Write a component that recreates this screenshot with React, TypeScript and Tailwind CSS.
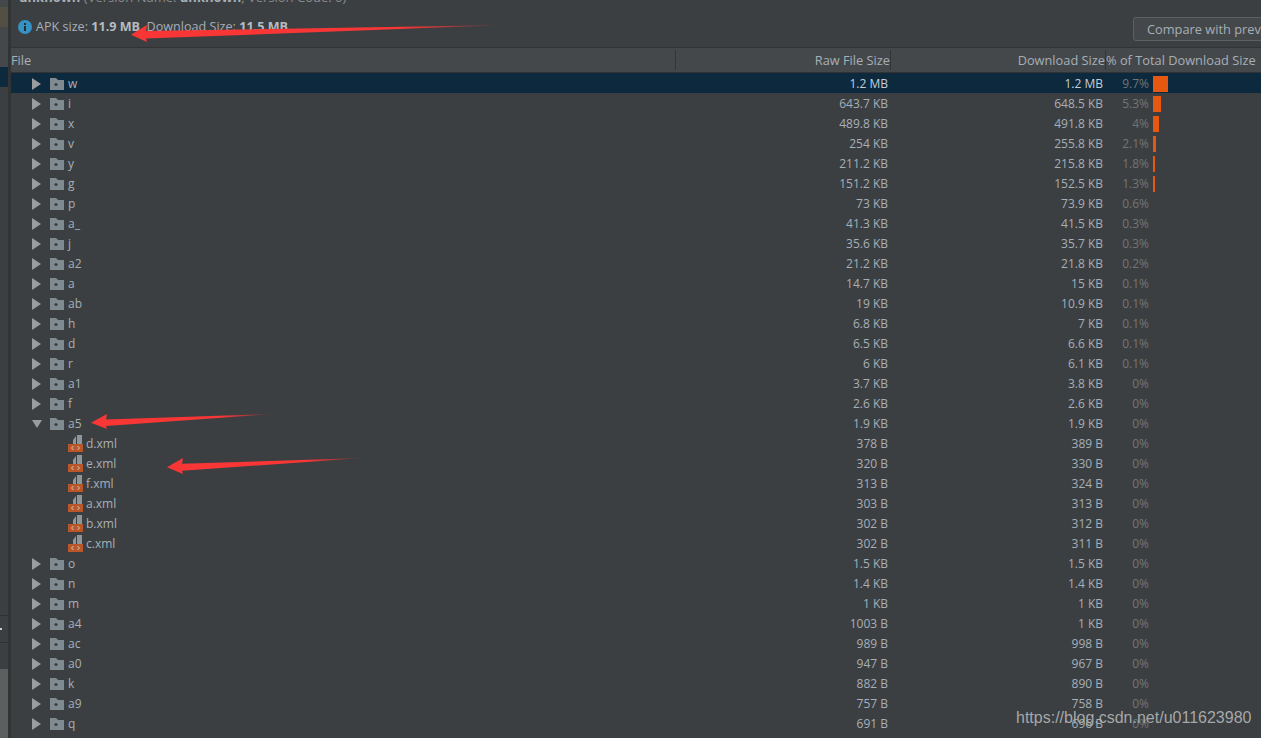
const rows: [string, string, string, string, number, boolean?][] = [
  ["w", "1.2 MB", "1.2 MB", "9.7%", 15],
  ["i", "643.7 KB", "648.5 KB", "5.3%", 8],
  ["x", "489.8 KB", "491.8 KB", "4%", 6],
  ["v", "254 KB", "255.8 KB", "2.1%", 3],
  ["y", "211.2 KB", "215.8 KB", "1.8%", 2],
  ["g", "151.2 KB", "152.5 KB", "1.3%", 2],
  ["p", "73 KB", "73.9 KB", "0.6%", 0],
  ["a_", "41.3 KB", "41.5 KB", "0.3%", 0],
  ["j", "35.6 KB", "35.7 KB", "0.3%", 0],
  ["a2", "21.2 KB", "21.8 KB", "0.2%", 0],
  ["a", "14.7 KB", "15 KB", "0.1%", 0],
  ["ab", "19 KB", "10.9 KB", "0.1%", 0],
  ["h", "6.8 KB", "7 KB", "0.1%", 0],
  ["d", "6.5 KB", "6.6 KB", "0.1%", 0],
  ["r", "6 KB", "6.1 KB", "0.1%", 0],
  ["a1", "3.7 KB", "3.8 KB", "0%", 0],
  ["f", "2.6 KB", "2.6 KB", "0%", 0],
  ["a5", "1.9 KB", "1.9 KB", "0%", 0, true],
  ["d.xml", "378 B", "389 B", "0%", -1],
  ["e.xml", "320 B", "330 B", "0%", -1],
  ["f.xml", "313 B", "324 B", "0%", -1],
  ["a.xml", "303 B", "313 B", "0%", -1],
  ["b.xml", "302 B", "312 B", "0%", -1],
  ["c.xml", "302 B", "311 B", "0%", -1],
  ["o", "1.5 KB", "1.5 KB", "0%", 0],
  ["n", "1.4 KB", "1.4 KB", "0%", 0],
  ["m", "1 KB", "1 KB", "0%", 0],
  ["a4", "1003 B", "1 KB", "0%", 0],
  ["ac", "989 B", "998 B", "0%", 0],
  ["a0", "947 B", "967 B", "0%", 0],
  ["k", "882 B", "890 B", "0%", 0],
  ["a9", "757 B", "758 B", "0%", 0],
  ["q", "691 B", "696 B", "0%", 0],
  ["\u00a0", "", "", "", 0],
];

function Folder() {
  return (
    <svg width="14" height="12" viewBox="0 0 14 12" className="shrink-0">
      <path d="M0 0H6L8 2H14V12H0Z" fill="#7f8b91" />
      <circle cx="6" cy="6.5" r="1.6" fill="#3c3f41" />
    </svg>
  );
}

function XmlFile() {
  return (
    <svg width="15" height="17" viewBox="0 0 15 17" className="shrink-0">
      <path d="M5 5L8 1V9H5Z" fill="#8f9699" />
      <rect x="9" y="0" width="5" height="9" fill="#8f9699" />
      <rect x="0" y="9" width="15" height="8" fill="#b9562a" />
      <path d="M5.500 11L3.500 13L5.500 15M9.500 11L11.500 13L9.500 15" fill="none" stroke="#d8c8bc" strokeWidth="1" />
    </svg>
  );
}

function Arrow({ className, w, h }: { className: string; w: number; h: number }) {
  return (
    <svg width={w} height={h} viewBox={`0 0 ${w} ${h}`} className={`absolute ${className}`}>
      <defs>
        <linearGradient id={`g${w}`} x1="0" x2="1" y1="0" y2="0">
          <stop offset="0.72" stopColor="#f93636" />
          <stop offset="1" stopColor="#f93636" stopOpacity="0.15" />
        </linearGradient>
      </defs>
      <path
        d={`M0 ${h * 0.58}L16 0L15 ${h * 0.36}L${w} 0L15 ${h * 0.8}L16 ${h}Z`}
        fill={`url(#g${w})`}
      />
    </svg>
  );
}

function Row({ r, selected }: { r: (typeof rows)[number]; selected: boolean }) {
  const [name, raw, dl, pct, bar, open] = r;
  const isFile = bar === -1;
  return (
    <div className={`grid h-5 shrink-0 grid-cols-[664px_215px_215px_156px] items-center ${selected ? "bg-[#0d293e]" : ""}`}>
      <div className="flex items-center">
        {isFile ? (
          <div className="ml-[57px] flex items-center gap-[3px]">
            <XmlFile />
            <span className="pt-px">{name}</span>
          </div>
        ) : name ? (
          <div className="ml-[21px] flex items-center">
            <svg width="10" height="12" viewBox="0 0 10 12" className="mr-[8px] shrink-0">
              {open ? <path d="M0 2H10L5 10Z" fill="#9a9c9e" /> : <path d="M0 0L9 6L0 12Z" fill="#9a9c9e" />}
            </svg>
            <Folder />
            <span className="ml-[4px] pt-px">{name}</span>
          </div>
        ) : null}
      </div>
      <div className={`pr-[2px] pt-px text-right ${selected ? "text-[#c3ced8]" : ""}`}>{raw}</div>
      <div className={`pr-[2px] pt-px text-right ${selected ? "text-[#c3ced8]" : ""}`}>{dl}</div>
      <div className="flex h-5 items-center text-[#727577]">
        <span className="w-[44px] pt-px text-right">{pct}</span>
        {bar > 0 && <div className="ml-[4px] h-4 bg-[#e6570f]" style={{ width: bar }} />}
      </div>
    </div>
  );
}

export default function App() {
  return (
    <div className="relative flex h-[738px] w-[1261px] overflow-hidden bg-[#3c3f41] font-['Open_Sans','Noto_Sans',sans-serif] text-[12px] leading-5 text-[#a6afb8]">
      {/* left tool strip */}
      <div className="flex w-2 shrink-0 flex-col bg-[#3c3f41]">
        <div className="h-[7px] bg-[#45484a]" />
        <div className="h-[20px] bg-[#534f45]" />
        <div className="h-[40px] bg-[#45484a]" />
        <div className="h-[20px] bg-[#0d293e]" />
        <div className="h-[528px] bg-[#3c3f41]" />
        <div className="h-px bg-[#2e3032]" />
        <div className="flex h-[26px] items-center bg-[#3c3f41]">
          <div className="h-[2px] w-[2px] bg-[#c8cacc]" />
        </div>
        <div className="h-px bg-[#2e3032]" />
        <div className="h-[26px] bg-[#3c3f41]" />
        <div className="flex-1 bg-[#5b5f60]" />
      </div>
      <div className="w-[3px] shrink-0 bg-[#313335]" />

      {/* main */}
      <div className="flex min-w-0 flex-1 flex-col">
        <div className="h-[47px] shrink-0 overflow-hidden">
          <div className="-mt-[13px] ml-[8px] h-5 whitespace-nowrap text-[13px] text-[#888b8d]">
            <b className="text-[#a6afb8]">unknown</b> (Version Name: <b className="text-[#a6afb8]">unknown</b>, Version Code: 0)
          </div>
          <div className="mt-[6px] flex items-start justify-between">
            <div className="ml-[7px] mt-[4px] flex items-center">
              <svg width="14" height="14" viewBox="0 0 14 14" className="mr-[4px]">
                <circle cx="7" cy="7" r="7" fill="#3592c4" />
                <rect x="6" y="6" width="2" height="5" fill="#2b2d2e" />
                <rect x="6" y="3" width="2" height="2" fill="#2b2d2e" />
              </svg>
              <span className="whitespace-nowrap text-[12.6px]">
                APK size: <b className="font-bold text-[#b5bcc2]">11.9 MB</b>, Download Size: <b className="font-bold text-[#b5bcc2]">11.5 MB</b>
              </span>
            </div>
            <div className="mt-[4px] flex h-[24px] w-[140px] shrink-0 -mr-[12px] items-center rounded-[3px] border border-[#5e6060] bg-[#45484a] pl-[13px] text-[12.8px] whitespace-nowrap text-[#a6afb8]">
              Compare with previous
            </div>
          </div>
        </div>

        <div className="h-px shrink-0 bg-[#313335]" />
        <div className="grid h-[25px] shrink-0 grid-cols-[665px_215px_215px_155px] items-center border-b border-[#313335] bg-[#45484a] text-[12.8px] text-[#a6afb8]">
          <div className="border-r border-[#333537]">File</div>
          <div className="border-r border-[#333537] text-right">Raw File Size</div>
          <div className="border-r border-[#333537] text-right">Download Size</div>
          <div className="whitespace-nowrap">% of Total Download Size</div>
        </div>
        <div className="flex flex-col">
          {rows.map((r, i) => (
            <Row key={i} r={r} selected={i === 0} />
          ))}
        </div>
      </div>

      {/* annotations */}
      <Arrow className="left-[131px] top-[25px]" w={374} h={17} />
      <Arrow className="left-[91px] top-[414px]" w={182} h={15} />
      <Arrow className="left-[167px] top-[458px]" w={196} h={16} />
      <div className="absolute left-[1016px] top-[708px] font-['Liberation_Sans',sans-serif] text-[16px] leading-5 text-[#b4b6b7]/90">
        https://blog.csdn.net/u011623980
      </div>
    </div>
  );
}
